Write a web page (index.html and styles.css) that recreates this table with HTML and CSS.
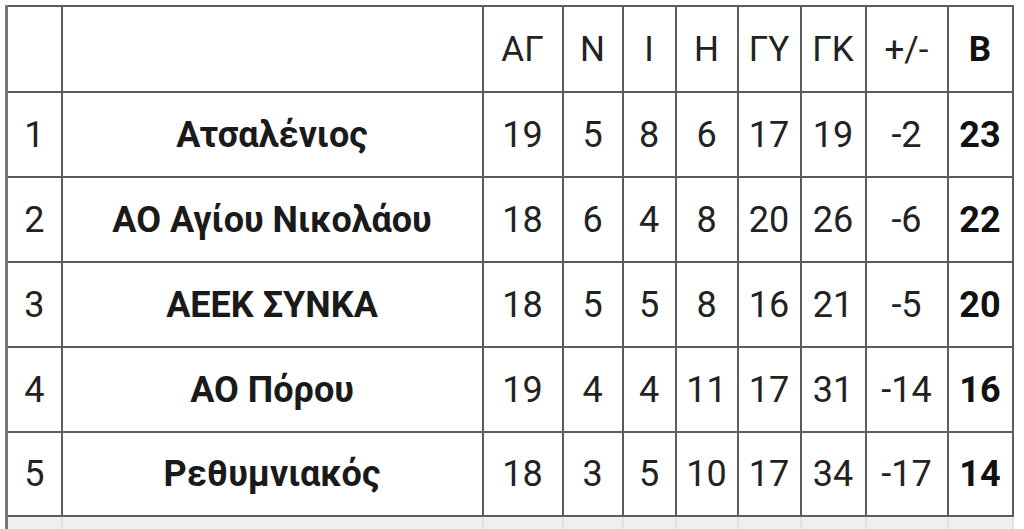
FILE: index.html
```html
<!DOCTYPE html>
<html lang="el">
<head>
<meta charset="utf-8">
<title>Βαθμολογία</title>
<link rel="stylesheet" href="styles.css">
</head>
<body>
<table class="standings">
  <colgroup>
    <col class="c-pos">
    <col class="c-team">
    <col class="c-ag">
    <col class="c-n">
    <col class="c-i">
    <col class="c-h">
    <col class="c-gy">
    <col class="c-gk">
    <col class="c-diff">
    <col class="c-pts">
  </colgroup>
  <tr class="head">
    <td></td><td></td>
    <td>ΑΓ</td><td>Ν</td><td>Ι</td><td>Η</td><td>ΓΥ</td><td>ΓΚ</td><td>+/-</td><td class="pts">Β</td>
  </tr>
  <tr>
    <td>1</td><td class="team">Ατσαλένιος</td>
    <td>19</td><td>5</td><td>8</td><td>6</td><td>17</td><td>19</td><td>-2</td><td class="pts">23</td>
  </tr>
  <tr>
    <td>2</td><td class="team">ΑΟ Αγίου Νικολάου</td>
    <td>18</td><td>6</td><td>4</td><td>8</td><td>20</td><td>26</td><td>-6</td><td class="pts">22</td>
  </tr>
  <tr>
    <td>3</td><td class="team">ΑΕΕΚ ΣΥΝΚΑ</td>
    <td>18</td><td>5</td><td>5</td><td>8</td><td>16</td><td>21</td><td>-5</td><td class="pts">20</td>
  </tr>
  <tr>
    <td>4</td><td class="team">ΑΟ Πόρου</td>
    <td>19</td><td>4</td><td>4</td><td>11</td><td>17</td><td>31</td><td>-14</td><td class="pts">16</td>
  </tr>
  <tr class="last">
    <td>5</td><td class="team">Ρεθυμνιακός</td>
    <td>18</td><td>3</td><td>5</td><td>10</td><td>17</td><td>34</td><td>-17</td><td class="pts">14</td>
  </tr>
  <tr class="next">
    <td></td><td></td><td></td><td></td><td></td><td></td><td></td><td></td><td></td><td></td>
  </tr>
</table>
</body>
</html>
```

FILE: styles.css
```css
html, body {
  margin: 0;
  padding: 0;
  background: #ffffff;
}

body {
  padding: 5px 0 0 5px;
  font-family: Roboto, "Noto Sans", "Liberation Sans", sans-serif;
  color: #222222;
}

.standings {
  border-collapse: collapse;
  table-layout: fixed;
  width: 1008px;
  border-left: 3px solid #777777;
  border-top: 2px solid #777777;
}

.c-pos  { width: 55px; }
.c-team { width: 421px; }
.c-ag   { width: 80px; }
.c-n    { width: 60px; }
.c-i    { width: 53px; }
.c-h    { width: 62px; }
.c-gy   { width: 63px; }
.c-gk   { width: 65px; }
.c-diff { width: 82px; }
.c-pts  { width: 65px; }

.standings td {
  border: 2px solid #5c5c5c;
  height: 83px;
  padding: 0;
  text-align: center;
  vertical-align: middle;
  font-size: 36px;
  line-height: 1;
  font-weight: 400;
}

.standings tr.head td {
  height: 84px;
  font-size: 35px;
}

.standings tr.last td {
  height: 82px;
}

.standings td.team {
  font-weight: 700;
  font-size: 36px;
  color: #1a1a1a;
}

.standings td.pts {
  font-weight: 700;
  color: #111111;
}

.standings tr.next td {
  height: 20px;
  background: #efefef;
  border-color: #e2e2e2;
  border-top: 2px solid #5c5c5c;
}
```
